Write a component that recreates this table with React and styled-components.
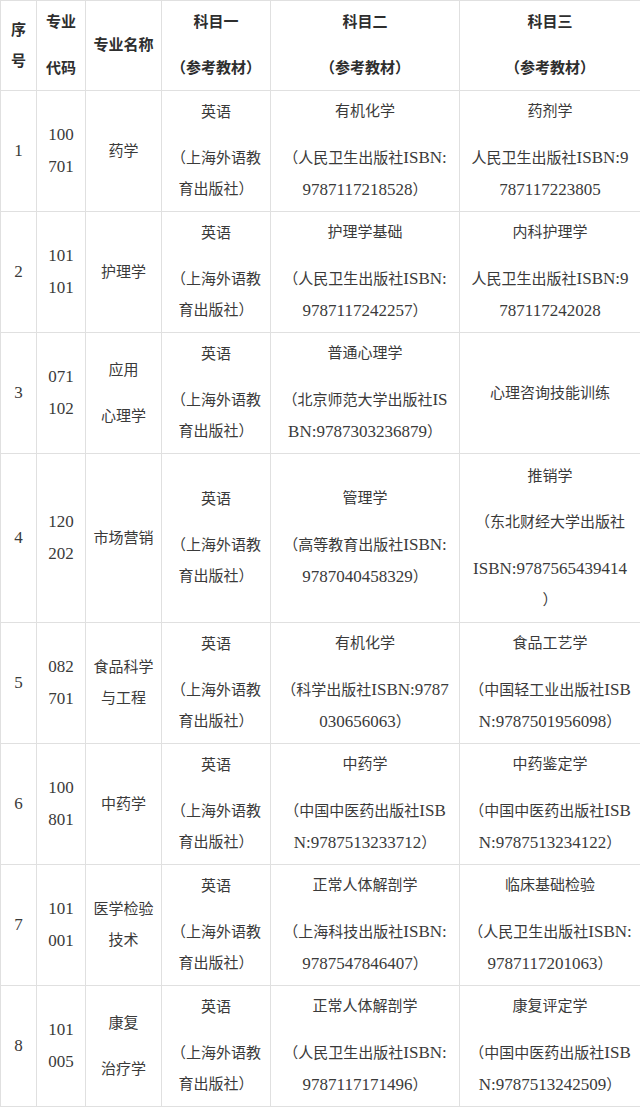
import React from 'react';
import styled, { createGlobalStyle } from 'styled-components';

const GlobalStyle = createGlobalStyle`
    html, body {
        margin: 0;
        padding: 0;
        background: #ffffff;
    }
    body {
        font-family: "Liberation Serif", "Noto Sans CJK SC", serif;
        color: #3a3a3a;
    }
`;

const Table = styled.table`
    width: 640px;
    table-layout: fixed;
    border-collapse: collapse;
    font-size: 15px;
`;

const Cell = styled.td`
    border: 1px solid #e0e0e0;
    padding: 4px 2px;
    height: ${p => p.$h}px;
    box-sizing: border-box;
    text-align: center;
    vertical-align: middle;
    font-weight: ${p => (p.$head ? 'bold' : 'normal')};
    color: ${p => (p.$head ? '#2e2e2e' : '#3a3a3a')};
`;

const Para = styled.div`
    margin: 0;
    & + & {
        margin-top: 15px;
    }
`;

const Line = styled.span`
    display: block;
    line-height: 31px;
    white-space: nowrap;
`;

// latin runs look larger in the original serif face
const Latin = styled.span`
    font-family: "Liberation Serif", serif;
    font-size: 17px;
`;

const widths = [36, 49, 76, 109, 189, 181];

// each cell: list of paragraphs, each paragraph a list of lines
const header = [
    [['序', '号']],
    [['专业'], ['代码']],
    [['专业名称']],
    [['科目一'], ['（参考教材）']],
    [['科目二'], ['（参考教材）']],
    [['科目三'], ['（参考教材）']],
];

const english = [['英语'], ['（上海外语教', '育出版社）']];

const rows = [
    {
        h: 121,
        cells: [
            [['1']], [['100', '701']], [['药学']], english,
            [['有机化学'], ['（人民卫生出版社ISBN:', '9787117218528）']],
            [['药剂学'], ['人民卫生出版社ISBN:9', '787117223805']],
        ],
    },
    {
        h: 121,
        cells: [
            [['2']], [['101', '101']], [['护理学']], english,
            [['护理学基础'], ['（人民卫生出版社ISBN:', '9787117242257）']],
            [['内科护理学'], ['人民卫生出版社ISBN:9', '787117242028']],
        ],
    },
    {
        h: 121,
        cells: [
            [['3']], [['071', '102']], [['应用'], ['心理学']], english,
            [['普通心理学'], ['（北京师范大学出版社IS', 'BN:9787303236879）']],
            [['心理咨询技能训练']],
        ],
    },
    {
        h: 169,
        cells: [
            [['4']], [['120', '202']], [['市场营销']], english,
            [['管理学'], ['（高等教育出版社ISBN:', '9787040458329）']],
            [['推销学'], ['（东北财经大学出版社'], ['ISBN:9787565439414', '）']],
        ],
    },
    {
        h: 121,
        cells: [
            [['5']], [['082', '701']], [['食品科学', '与工程']], english,
            [['有机化学'], ['（科学出版社ISBN:9787', '030656063）']],
            [['食品工艺学'], ['（中国轻工业出版社ISB', 'N:9787501956098）']],
        ],
    },
    {
        h: 121,
        cells: [
            [['6']], [['100', '801']], [['中药学']], english,
            [['中药学'], ['（中国中医药出版社ISB', 'N:9787513233712）']],
            [['中药鉴定学'], ['（中国中医药出版社ISB', 'N:9787513234122）']],
        ],
    },
    {
        h: 121,
        cells: [
            [['7']], [['101', '001']], [['医学检验', '技术']], english,
            [['正常人体解剖学'], ['（上海科技出版社ISBN:', '9787547846407）']],
            [['临床基础检验'], ['（人民卫生出版社ISBN:', '9787117201063）']],
        ],
    },
    {
        h: 121,
        cells: [
            [['8']], [['101', '005']], [['康复'], ['治疗学']], english,
            [['正常人体解剖学'], ['（人民卫生出版社ISBN:', '9787117171496）']],
            [['康复评定学'], ['（中国中医药出版社ISB', 'N:9787513242509）']],
        ],
    },
];

// split a line into ascii / non-ascii runs
const renderLine = (text) =>
    text.split(/([\x20-\x7e]+)/).filter(Boolean).map((part, i) =>
        /^[\x20-\x7e]+$/.test(part) ? <Latin key={i}>{part}</Latin> : part
    );

const CellContent = ({ paras }) => (
    <>
        {paras.map((lines, i) => (
            <Para key={i}>
                {lines.map((l, j) => <Line key={j}>{renderLine(l)}</Line>)}
            </Para>
        ))}
    </>
);

const App = () => {
    return (
        <>
            <GlobalStyle />
            <Table>
                <colgroup>
                    {widths.map((w, i) => <col key={i} style={{ width: w }} />)}
                </colgroup>
                <thead>
                    <tr>
                        {header.map((c, i) => (
                            <Cell as="th" key={i} $head $h={90}>
                                <CellContent paras={c} />
                            </Cell>
                        ))}
                    </tr>
                </thead>
                <tbody>
                    {rows.map((r, i) => (
                        <tr key={i}>
                            {r.cells.map((c, j) => (
                                <Cell key={j} $h={r.h}>
                                    <CellContent paras={c} />
                                </Cell>
                            ))}
                        </tr>
                    ))}
                </tbody>
            </Table>
        </>
    );
};

export default App;
